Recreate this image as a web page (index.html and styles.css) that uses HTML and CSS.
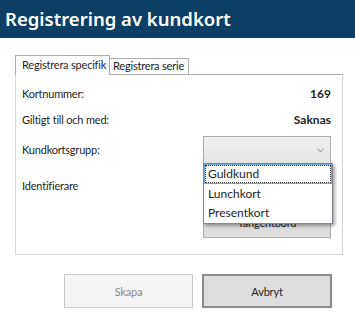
FILE: index.html
```html
<!DOCTYPE html>
<html lang="sv">
<head>
  <meta charset="UTF-8">
  <meta name="viewport" content="width=device-width, initial-scale=1.0">
  <title>Registrering av kundkort</title>
  <link rel="stylesheet" href="styles.css">
</head>
<body>
  <div class="titlebar">Registrering av kundkort</div>

  <div class="content">
    <div class="tabs">
      <div class="tab active">Registrera specifik</div>
      <div class="tab">Registrera serie</div>
    </div>

    <div class="panel">
      <div class="row">
        <span>Kortnummer:</span>
        <span class="value">169</span>
      </div>
      <div class="row">
        <span>Giltigt till och med:</span>
        <span class="value">Saknas</span>
      </div>
      <div class="row row-combo">
        <span>Kundkortsgrupp:</span>
        <div class="combo">
          <svg class="chevron" width="7" height="5" viewBox="0 0 7 5">
            <polyline points="0.5,0.8 3.5,3.8 6.5,0.8" fill="none" stroke="#7a7a7a" stroke-width="1"/>
          </svg>
          <ul class="dropdown">
            <li class="selected">Guldkund</li>
            <li>Lunchkort</li>
            <li>Presentkort</li>
          </ul>
        </div>
      </div>
      <div class="row row-ident">
        <span>Identifierare</span>
      </div>
      <div class="row row-keyboard">
        <button class="btn keyboard">Tangentbord</button>
      </div>
    </div>

    <div class="actions">
      <button class="btn disabled">Skapa</button>
      <button class="btn default">Avbryt</button>
    </div>
  </div>
</body>
</html>
```

FILE: styles.css
```css
body {
  margin: 0;
  background: #ffffff;
  font-family: 'Lato', 'Noto Sans', sans-serif;
  font-size: 11px;
  letter-spacing: -0.2px;
  color: #1e1e1e;
}
.titlebar {
  height: 38px;
  line-height: 38px;
  background: #0c3f63;
  color: #ffffff;
  font-family: 'Noto Sans', sans-serif;
  font-size: 18.5px;
  font-weight: 600;
  letter-spacing: 0;
  padding-left: 5px;
}
.content {
  padding: 16px 0 0 15px;
}
.tabs {
  display: flex;
  align-items: flex-end;
  height: 20px;
}
.tab {
  box-sizing: border-box;
  height: 16px;
  line-height: 14px;
  width: 79px;
  padding: 0 3px;
  border: 1px solid #acacac;
  border-bottom: none;
  background: #fbfbfb;
  white-space: nowrap;
}
.tab.active {
  height: 20px;
  line-height: 18px;
  width: 95px;
  padding: 0 6px;
  background: #ffffff;
  margin-bottom: -1px;
  position: relative;
  z-index: 1;
}
.tab + .tab {
  border-left: none;
}
.panel {
  box-sizing: border-box;
  width: 328px;
  height: 181px;
  border: 1px solid #d5d5d5;
  border-top-color: #acacac;
  padding: 11px 11px 0 6px;
  display: flex;
  flex-direction: column;
}
.row {
  display: flex;
  justify-content: space-between;
  align-items: center;
  height: 16px;
  line-height: 16px;
}
.row + .row {
  margin-top: 10px;
}
.value {
  font-weight: bold;
  font-size: 12px;
  letter-spacing: 0;
}
.row.row-combo {
  height: 28px;
  margin-top: 8px;
}
.row.row-ident {
  margin-top: 14px;
  align-items: flex-start;
}
.row.row-keyboard {
  height: 32px;
  margin-top: 12px;
  justify-content: flex-end;
}
.combo {
  box-sizing: border-box;
  position: relative;
  width: 128px;
  height: 28px;
  border: 1px solid #acacac;
  background: linear-gradient(#f0f0f0, #e5e5e5);
}
.chevron {
  position: absolute;
  right: 6px;
  top: 11px;
}
.dropdown {
  box-sizing: border-box;
  position: absolute;
  top: 100%;
  left: -1px;
  width: 130px;
  margin: 0;
  padding: 0;
  list-style: none;
  background: #ffffff;
  border: 1px solid #828790;
  box-shadow: 2px 2px 3px rgba(0, 0, 0, 0.35);
  z-index: 5;
  font-size: 12px;
  letter-spacing: 0;
}
.dropdown li {
  box-sizing: border-box;
  height: 19.5px;
  line-height: 19px;
  padding-left: 4px;
}
.dropdown li.selected {
  border: 1px solid #6fa3d6;
  outline: 1px dotted #333333;
  outline-offset: -2px;
  line-height: 17px;
  padding-left: 3px;
}
.btn {
  box-sizing: border-box;
  font-family: inherit;
  font-size: 11px;
  letter-spacing: -0.2px;
  color: #1e1e1e;
  background: #dddddd;
  border: 1px solid #adadad;
  padding: 0;
  margin: 0;
}
.btn.keyboard {
  width: 128px;
  height: 32px;
  padding-top: 1px;
}
.actions {
  display: flex;
  gap: 9px;
  margin: 19px 0 0 49px;
}
.actions .btn {
  width: 129px;
  height: 34px;
}
.btn.disabled {
  background: #f4f4f4;
  border-color: #c9c9c9;
  color: #8a8a8a;
}
.btn.default {
  width: 130px;
  border: 2px solid #8a8a8a;
}
```
